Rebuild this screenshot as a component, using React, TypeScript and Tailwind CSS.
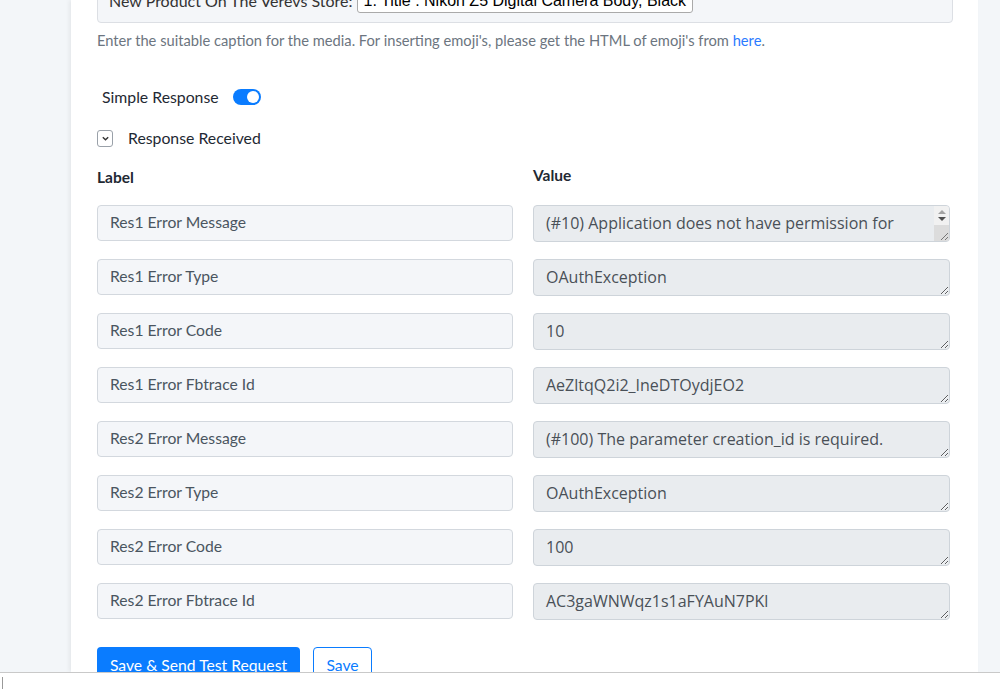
import React from 'react'

type Row = { label: string; value: string; scroll?: boolean }

const rows: Row[] = [
  { label: 'Res1 Error Message', value: '(#10) Application does not have permission for this action', scroll: true },
  { label: 'Res1 Error Type', value: 'OAuthException' },
  { label: 'Res1 Error Code', value: '10' },
  { label: 'Res1 Error Fbtrace Id', value: 'AeZltqQ2i2_IneDTOydjEO2' },
  { label: 'Res2 Error Message', value: '(#100) The parameter creation_id is required.' },
  { label: 'Res2 Error Type', value: 'OAuthException' },
  { label: 'Res2 Error Code', value: '100' },
  { label: 'Res2 Error Fbtrace Id', value: 'AC3gaWNWqz1s1aFYAuN7PKl' }
]

const sans = "font-['Lato','Noto_Sans',sans-serif]"

// textarea with the classic scrollbar visible (overflowing content)
function ScrollingValue({ value }: { value: string }) {
  return (
    <div className="flex h-[37px] overflow-hidden rounded-[4px] border border-[#ced4da] bg-[#e9ecef]">
      <div className="flex-1 overflow-hidden px-[12px] py-[5px] font-['Open_Sans','Noto_Sans',sans-serif] text-[16px] leading-[25px] text-[#495057]">
        {value}
      </div>
      <div className="flex w-[15px] flex-col">
        <div className="flex h-[19px] flex-col items-center justify-center gap-[3px] bg-[#f1f1f1]">
          <svg width="8" height="4" viewBox="0 0 8 4">
            <path d="M0 4 4 0 8 4Z" fill="#a3a3a3" />
          </svg>
          <svg width="8" height="4" viewBox="0 0 8 4">
            <path d="M0 0 4 4 8 0Z" fill="#505050" />
          </svg>
        </div>
        <div className="flex flex-1 items-end justify-end bg-[#dcdcdc] pb-[1px] pr-[1px]">
          <svg width="8" height="8" viewBox="0 0 8 8" stroke="#777" strokeWidth="1">
            <path d="M1 8 8 1M5 8 8 5" />
          </svg>
        </div>
      </div>
    </div>
  )
}

export default function App() {
  return (
    <div className={`flex h-[693px] w-[1000px] flex-col overflow-hidden bg-[#f3f6f9] ${sans}`}>
      <div className="flex h-[672px] overflow-hidden">
        <div className="w-[71px] shrink-0" />
        <div className="w-[907px] shrink-0 bg-white px-[26px] shadow-[-2px_0_4px_rgba(0,0,0,0.06)]">
          {/* caption field, scrolled mostly out of view */}
          <div className="-mt-[22px] flex h-[45px] w-[856px] items-center rounded-[4px] border border-[#dcdfe4] bg-[#f4f6f9] pl-[11px] text-[16px] text-[#333]">
            <span>New Product On The Verevs Store:&nbsp;</span>
            <span className="rounded-[3px] border border-[#aaa] bg-white px-[6px] font-['Liberation_Sans',sans-serif] text-[16px] leading-[22px] text-black">
              1. Title : Nikon Z5 Digital Camera Body, Black
            </span>
          </div>
          <p className="mt-[8px] text-[14.7px] leading-[18px] text-[#6c7580]">
            Enter the suitable caption for the media. For inserting emoji's, please get the HTML of emoji's from{' '}
            <span className="text-[#2b7bff]">here</span>.
          </p>

          <div className="mt-[37px] flex h-[22px] items-center pl-[5px]">
            <span className="text-[15.8px] leading-[22px] text-[#1f2933]">Simple Response</span>
            <span className="ml-[14px] flex h-[16px] w-[28px] items-center justify-end rounded-full bg-[#0a7cff] pr-[2px]">
              <span className="h-[12px] w-[12px] rounded-full bg-white" />
            </span>
          </div>

          <div className="mt-[19px] flex h-[22px] items-center">
            <span className="flex h-[17px] w-[16px] items-center justify-center rounded-[3px] border border-[#9aa1a9] bg-white">
              <svg width="9" height="9" viewBox="0 0 10 10" fill="none" stroke="#333" strokeWidth="1.5">
                <path d="M2 3.5 5 6.5 8 3.5" />
              </svg>
            </span>
            <span className="ml-[15px] text-[15.8px] leading-[22px] text-[#1f2933]">Response Received</span>
          </div>

          <div className="mt-[15px] grid grid-cols-[416px_417px] gap-x-[20px]">
            <div className="mt-[2px] text-[15.5px] leading-[22px] font-bold text-[#1f2933]">Label</div>
            <div className="text-[15.5px] leading-[22px] font-bold text-[#1f2933]">Value</div>
          </div>

          <div className="mt-[17px] flex flex-col gap-[17px]">
            {rows.map((row) => (
              <div key={row.label} className="grid grid-cols-[416px_417px] gap-x-[20px]">
                <div className="flex h-[36px] items-center rounded-[4px] border border-[#d3d8de] bg-[#f4f6f9] px-[12px] text-[15.7px] text-[#4a5560]">
                  {row.label}
                </div>
                {row.scroll ? (
                  <ScrollingValue value={row.value} />
                ) : (
                  <textarea
                    readOnly
                    rows={1}
                    value={row.value}
                    className="h-[37px] rounded-[4px] border border-[#ced4da] bg-[#e9ecef] px-[12px] py-[5px] font-['Open_Sans','Noto_Sans',sans-serif] text-[16px] leading-[25px] text-[#495057] outline-none"
                  />
                )}
              </div>
            ))}
          </div>

          <div className="mt-[27px] flex gap-[13px]">
            <button className="h-[38px] w-[203px] rounded-[4px] bg-[#0a7cff] text-[15.7px] text-white">
              Save &amp; Send Test Request
            </button>
            <button className="h-[38px] w-[59px] rounded-[4px] border border-[#0a7cff] bg-white text-[15.7px] text-[#0a7cff]">
              Save
            </button>
          </div>
        </div>
        <div className="flex-1" />
      </div>
      <div className="flex h-[21px] items-center border-t border-[#c9c9c9] bg-white pl-[2px]">
        <span className="h-[12px] w-px bg-[#999]" />
      </div>
    </div>
  )
}
